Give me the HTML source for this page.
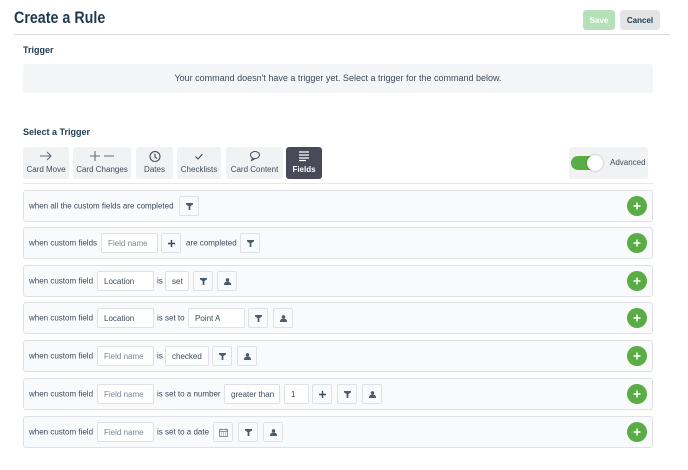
<!DOCTYPE html>
<html><head><meta charset="utf-8"><style>
*{box-sizing:border-box;margin:0;padding:0}
body{width:688px;height:470px;background:#fff;font-family:"Liberation Sans",Arial,sans-serif;color:#172b4d;position:relative;overflow:hidden}
.a{position:absolute}
h1{position:absolute;left:14px;top:8px;font-size:17px;font-weight:bold;color:#1d3a4f;transform:scaleX(0.84);transform-origin:left top}
.btn{position:absolute;top:10px;height:20px;border-radius:3px;font-size:8px;font-weight:bold;display:flex;align-items:center;justify-content:center}
.lbl{position:absolute;left:23px;font-size:9px;font-weight:bold;color:#1d3a4f}
.tab{position:absolute;top:147px;height:32px;background:#f1f2f4;border-radius:3px;font-size:8px;color:#3f4b5b;text-align:center}
.tab span{position:absolute;left:0;right:0;bottom:5px;white-space:nowrap}
.tab svg{position:absolute;left:50%;top:3px;transform:translateX(-50%)}
.row{position:absolute;left:23px;width:630px;height:32px;background:#f9fafc;border:1px solid #dfe1e6;border-radius:3px}
.t{position:absolute;font-size:8px;color:#3b4a5a;top:50%;transform:translateY(-50%);white-space:nowrap}
.box{position:absolute;top:5px;height:20px;background:#fff;border:1px solid #dfe1e6;border-radius:2px;font-size:8px;color:#3b4a5a;display:flex;align-items:center;padding-left:6px;white-space:nowrap}
.ph{color:#7a8796}
.ic{position:absolute;top:5px;width:20px;height:20px;border:1px solid #dfe1e6;border-radius:2px;background:#f9fafc;display:flex;align-items:center;justify-content:center}
.plus{position:absolute;right:5px;top:5px;width:20px;height:20px;border-radius:50%;background:#5aac44;display:flex;align-items:center;justify-content:center}
</style></head><body>
<h1>Create a Rule</h1>
<div class="btn" style="left:583px;width:32px;background:#b5e0b8;color:#fff">Save</div>
<div class="btn" style="left:620px;width:40px;background:#e2e4e6;color:#1d3a4f">Cancel</div>
<div class="a" style="left:14px;top:34px;width:656px;height:1px;background:#d4d6da"></div>
<div class="lbl" style="top:45px">Trigger</div>
<div class="a" style="left:23px;top:64px;width:630px;height:29px;background:#f4f5f7;border-radius:3px;font-size:9px;color:#3b4a5a;text-align:center;line-height:29px">Your command doesn't have a trigger yet. Select a trigger for the command below.</div>
<div class="lbl" style="top:127px">Select a Trigger</div>

<div class="tab" style="left:23px;width:46px"><svg width="14" height="12" viewBox="0 0 14 12"><path d="M1 6h11M8 2l4 4-4 4" stroke="#5e6c7a" stroke-width="1.1" fill="none"/></svg><span>Card Move</span></div>
<div class="tab" style="left:73px;width:58px"><svg width="26" height="12" viewBox="0 0 26 12"><path d="M1 6h10M6 1v10M15 6h10" stroke="#5e6c7a" stroke-width="1.1" fill="none"/></svg><span>Card Changes</span></div>
<div class="tab" style="left:136px;width:37px"><svg width="12" height="13" viewBox="0 0 12 13"><circle cx="6" cy="6.5" r="5" stroke="#3f4b5b" stroke-width="1.1" fill="none"/><path d="M6 3.5v3.5l2 1.5" stroke="#3f4b5b" stroke-width="1.1" fill="none"/></svg><span>Dates</span></div>
<div class="tab" style="left:177px;width:44px"><svg width="10" height="12" viewBox="0 0 10 12"><path d="M1.5 6.5l2.5 2.5 4.5-5" stroke="#3f4b5b" stroke-width="1.1" fill="none"/></svg><span>Checklists</span></div>
<div class="tab" style="left:226px;width:57px"><svg width="12" height="12" viewBox="0 0 12 12"><ellipse cx="6" cy="5" rx="4.5" ry="3.5" stroke="#3f4b5b" stroke-width="1" fill="none"/><path d="M3.5 8l-1 2.5 3-1.5" stroke="#3f4b5b" stroke-width="1" fill="none"/></svg><span>Card Content</span></div>
<div class="tab" style="left:286px;width:36px;background:#4a4957;color:#fff;font-weight:bold"><svg width="10" height="12" viewBox="0 0 10 12"><path d="M0 2h10M0 5h10M0 8h10M0 10.5h7" stroke="#fff" stroke-width="1.3"/></svg><span>Fields</span></div>

<div class="a" style="left:569px;top:147px;width:79px;height:32px;background:#f1f2f4;border-radius:3px">
<div class="a" style="left:2px;top:9px;width:30px;height:14px;border-radius:7px;background:#5aac44"></div>
<div class="a" style="left:18px;top:8px;width:16px;height:16px;border-radius:50%;background:#fff;box-shadow:0 0 2px rgba(0,0,0,.3)"></div>
<div class="a" style="left:41px;top:11px;font-size:8px;color:#3b4a5a">Advanced</div>
</div>
<div class="a" style="left:23px;top:183px;width:630px;height:1px;background:#e6e7ea"></div>

<svg width="0" height="0" style="position:absolute"><defs>
<symbol id="f" viewBox="0 0 8 8"><path d="M0 0h8v1.6L5 3.5V8H3V3.5L0 1.6z" fill="#4d5b6a"/></symbol>
<symbol id="p" viewBox="0 0 8 8"><circle cx="4" cy="2.2" r="2" fill="#4d5b6a"/><path d="M0 8c0-3 1.5-3.8 4-3.8S8 5 8 8z" fill="#4d5b6a"/></symbol>
<symbol id="pl" viewBox="0 0 8 8"><path d="M4 0v8M0 4h8" stroke="#3b4a5a" stroke-width="1.6"/></symbol>
<symbol id="wp" viewBox="0 0 8 8"><path d="M4 0.5v7M0.5 4h7" stroke="#fff" stroke-width="1.5"/></symbol>
</defs></svg>

<div class="row" style="top:190px"><span class="t" style="left:5px">when all the custom fields are completed</span>
<div class="ic" style="left:155px"><svg width="7" height="7"><use href="#f"/></svg></div>
<div class="plus"><svg width="8" height="8"><use href="#wp"/></svg></div></div>

<div class="row" style="top:227px"><span class="t" style="left:5px">when custom fields</span>
<div class="box ph" style="left:77px;width:57px">Field name</div>
<div class="ic" style="left:137px"><svg width="7" height="7"><use href="#pl"/></svg></div>
<span class="t" style="left:162px">are completed</span>
<div class="ic" style="left:216px"><svg width="7" height="7"><use href="#f"/></svg></div>
<div class="plus"><svg width="8" height="8"><use href="#wp"/></svg></div></div>

<div class="row" style="top:265px"><span class="t" style="left:5px">when custom field</span>
<div class="box" style="left:73px;width:57px">Location</div>
<span class="t" style="left:133px">is</span>
<div class="box" style="left:141px;width:24px">set</div>
<div class="ic" style="left:169px"><svg width="7" height="7"><use href="#f"/></svg></div>
<div class="ic" style="left:193px"><svg width="7" height="7"><use href="#p"/></svg></div>
<div class="plus"><svg width="8" height="8"><use href="#wp"/></svg></div></div>

<div class="row" style="top:302px"><span class="t" style="left:5px">when custom field</span>
<div class="box" style="left:73px;width:57px">Location</div>
<span class="t" style="left:133px">is set to</span>
<div class="box" style="left:164px;width:57px">Point A</div>
<div class="ic" style="left:224px"><svg width="7" height="7"><use href="#f"/></svg></div>
<div class="ic" style="left:249px"><svg width="7" height="7"><use href="#p"/></svg></div>
<div class="plus"><svg width="8" height="8"><use href="#wp"/></svg></div></div>

<div class="row" style="top:340px"><span class="t" style="left:5px">when custom field</span>
<div class="box ph" style="left:73px;width:57px">Field name</div>
<span class="t" style="left:133px">is</span>
<div class="box" style="left:141px;width:44px">checked</div>
<div class="ic" style="left:188px"><svg width="7" height="7"><use href="#f"/></svg></div>
<div class="ic" style="left:213px"><svg width="7" height="7"><use href="#p"/></svg></div>
<div class="plus"><svg width="8" height="8"><use href="#wp"/></svg></div></div>

<div class="row" style="top:378px"><span class="t" style="left:5px">when custom field</span>
<div class="box ph" style="left:73px;width:57px">Field name</div>
<span class="t" style="left:133px">is set to a number</span>
<div class="box" style="left:200px;width:56px">greater than</div>
<div class="box" style="left:260px;width:25px">1</div>
<div class="ic" style="left:288px"><svg width="7" height="7"><use href="#pl"/></svg></div>
<div class="ic" style="left:313px"><svg width="7" height="7"><use href="#f"/></svg></div>
<div class="ic" style="left:338px"><svg width="7" height="7"><use href="#p"/></svg></div>
<div class="plus"><svg width="8" height="8"><use href="#wp"/></svg></div></div>

<div class="row" style="top:416px"><span class="t" style="left:5px">when custom field</span>
<div class="box ph" style="left:73px;width:57px">Field name</div>
<span class="t" style="left:133px">is set to a date</span>
<div class="ic" style="left:189px"><svg width="9" height="9" viewBox="0 0 9 9"><rect x="0.5" y="1.5" width="8" height="7" fill="none" stroke="#6b7785" stroke-width="0.8"/><path d="M0.5 3.5h8M2 0.5v2M7 0.5v2M2 5h1M4 5h1M6 5h1M2 7h1M4 7h1M6 7h1" stroke="#6b7785" stroke-width="0.7"/></svg></div>
<div class="ic" style="left:214px"><svg width="7" height="7"><use href="#f"/></svg></div>
<div class="ic" style="left:239px"><svg width="7" height="7"><use href="#p"/></svg></div>
<div class="plus"><svg width="8" height="8"><use href="#wp"/></svg></div></div>
</body></html>
